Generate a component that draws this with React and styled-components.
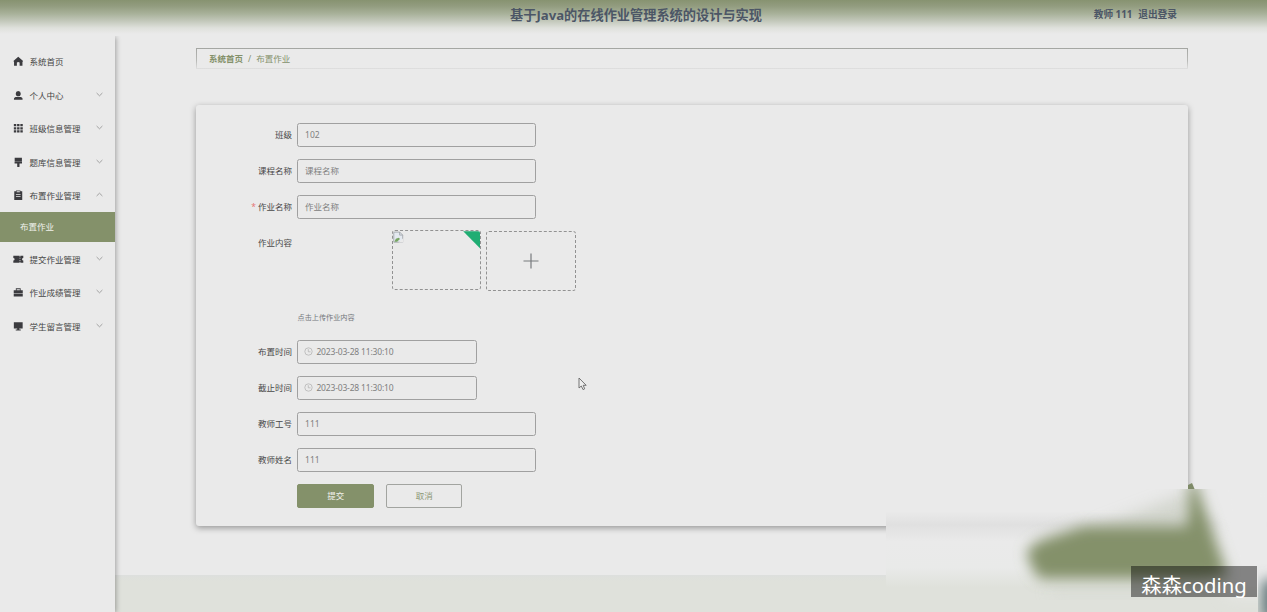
import React from 'react';
import styled, { createGlobalStyle } from 'styled-components';

const GlobalStyle = createGlobalStyle`
  *, *::before, *::after { box-sizing: border-box; }
  body {
    margin: 0;
    overflow: hidden;
    background: #eaeaea;
    color: #505050;
    font-family: "Noto Sans", "Noto Sans CJK SC", sans-serif;
    font-size: 8.5px;
  }
`;

const Page = styled.div`
  position: relative;
  display: flex;
  flex-direction: column;
  width: 1267px;
  height: 612px;
  overflow: hidden;
`;

const Header = styled.header`
  flex: none;
  display: grid;
  grid-template-columns: 1fr auto 1fr;
  align-items: center;
  height: 36px;
  padding: 0 90px 7px 95px;
  background: linear-gradient(#879370 0, #929c7f 6px, #a9b29b 14px, #c3c8bb 21px, #dfe1dc 28px, #eaeaea 34px);
  color: #4c5666;
  font-weight: 700;
`;

const Title = styled.h1`
  grid-column: 2;
  margin: 0;
  font-size: 13.2px;
  line-height: 20px;
  white-space: nowrap;
`;

const Account = styled.div`
  display: flex;
  justify-content: flex-end;
  gap: 6px;
  padding-top: 1px;
  font-size: 9.7px;
  line-height: 20px;
`;

const Body = styled.div`
  flex: 1;
  display: flex;
  min-height: 0;
`;

const Sidebar = styled.nav`
  flex: none;
  width: 115.4px;
  padding-top: 8.4px;
  box-shadow: 1px 1px 5px rgba(0, 0, 0, 0.32);
  clip-path: inset(0 -8px 0 0);
  z-index: 1;
  background: #eaeaea;
`;

const MenuItem = styled.div`
  display: flex;
  align-items: center;
  height: 33.5px;
  padding: 0 12px 0 13px;
  color: #454545;
  svg:first-child { margin: 1px 6px 0 0; }
`;

const MenuText = styled.span`
  flex: 1;
  white-space: nowrap;
`;

const Chevron = styled.svg`
  width: 7px;
  height: 5px;
  margin-bottom: 1px;
  fill: none;
  stroke: #999;
  stroke-width: 0.9;
  transform: ${(p) => (p.$open ? 'rotate(180deg)' : 'none')};
`;

const SubItem = styled.div`
  height: 30px;
  padding-left: 20px;
  background: #84916a;
  color: #f1f2ec;
  line-height: 29.4px;
`;

const Main = styled.main`
  flex: 1;
  display: flex;
  flex-direction: column;
  padding-top: 12px;
`;

const Breadcrumb = styled.div`
  display: flex;
  align-items: center;
  gap: 5px;
  width: 992px;
  height: 21px;
  margin-left: 80.6px;
  padding: 0 12px 1px;
  border: 1px solid;
  border-image: linear-gradient(#a4a6a2, #b8b9b6 60%, #e0e0e0) 1;
  color: #84916a;
`;

const Crumb = styled.span`
  font-weight: ${(p) => (p.$link ? 600 : 400)};
`;

const Card = styled.section`
  width: 992px;
  height: 421px;
  margin: 36px 0 0 80.6px;
  padding: 18px 0 0 40px;
  border-radius: 3px;
  box-shadow: 0 2px 6px rgba(0, 0, 0, 0.36);
  background: #eaeaea;
`;

const Field = styled.div`
  display: flex;
  gap: 5.5px;
  height: ${(p) => p.$height || 24}px;
  margin-bottom: 12px;
`;

const Label = styled.label`
  width: 56px;
  color: #484848;
  line-height: 24px;
  text-align: right;
  white-space: nowrap;
  &::before {
    content: ${(p) => (p.$required ? '"*"' : 'none')};
    margin-right: 2px;
    color: #e57373;
  }
`;

const InputBox = styled.div`
  display: flex;
  align-items: center;
  gap: 3.5px;
  width: ${(p) => (p.$date ? 179.5 : 239)}px;
  height: 24px;
  padding: 0 ${(p) => (p.$date ? 5.4 : 6.6)}px 1.4px;
  border: 1px solid #a0a0a0;
  border-radius: 2.5px;
  color: #808080;
  letter-spacing: ${(p) => (p.$date ? '-0.17px' : '0')};
`;

const Upload = styled.div`
  display: flex;
  flex-direction: column;
  justify-content: space-between;
`;

const Tiles = styled.div`
  display: flex;
  align-items: flex-end;
  gap: 5px;
  height: 61px;
  margin: -1px 0 0 94.7px;
`;

const Tile = styled.div`
  display: flex;
  align-items: center;
  justify-content: center;
  align-self: ${(p) => (p.$filled ? 'flex-start' : 'flex-end')};
  width: ${(p) => (p.$filled ? 89 : 90)}px;
  height: 60px;
  border: 1px dashed #929292;
  border-radius: 3px;
  overflow: hidden;
`;

const Hint = styled.div`
  margin-bottom: 4px;
  color: #74777c;
  font-size: 7.15px;
  line-height: 14px;
`;

const Buttons = styled.div`
  display: flex;
  gap: 12px;
  padding-left: 61.5px;
`;

const Button = styled.button`
  width: 76.5px;
  height: 24px;
  padding: 0 0 2px;
  border: 1px solid ${(p) => (p.$primary ? '#84916a' : '#a2a4a0')};
  border-radius: 2px;
  background: ${(p) => (p.$primary ? '#84916a' : 'transparent')};
  color: ${(p) => (p.$primary ? '#f2f3ee' : '#8c9776')};
  font: inherit;
`;

const Footer = styled.footer`
  height: 37px;
  margin-top: auto;
  background: linear-gradient(#dddfdd, #dfe1db 6px);
`;

const Pointer = styled.svg`
  position: absolute;
  left: 578px;
  top: 377px;
`;

const Mascot = styled.svg`
  position: absolute;
  right: 0;
  bottom: 0;
`;

const Watermark = styled.div`
  position: absolute;
  right: 10px;
  bottom: 15px;
  width: 126px;
  height: 31px;
  background: rgba(0, 0, 0, 0.44);
  color: #fff;
  font-size: 20.3px;
  line-height: 38.5px;
  text-align: center;
  white-space: nowrap;
`;

const icons = {
  home: <path d="M5 .6.4 4.8 1 5.6V9.4h2.7V6.2q1.3-1 2.6 0v3.2H9V5.6l.6-.8Z" />,
  user: <path d="M5 1a2.5 2.5 0 0 1 2.4 2.5C7.4 5 6.4 6 5 6S2.6 5 2.6 3.5A2.5 2.5 0 0 1 5 1ZM.9 9.3V8.4C1 7 2 6.6 3.4 6.6h3.2C8 6.6 9 7 9.1 8.4v.9Z" />,
  grid: <path d="M.8 1h2.3v2.1H.8Zm3.1 0h2.3v2.1H3.9ZM7 1h2.3v2.1H7ZM.8 4h2.3v2.1H.8Zm3.1 0h2.3v2.1H3.9ZM7 4h2.3v2.1H7ZM.8 7h2.3v2.1H.8Zm3.1 0h2.3v2.1H3.9ZM7 7h2.3v2.1H7Z" />,
  brush: <path d="M1.6.8h6.9v3.5H1.6Zm-.1 3.8h7.1v1.5H6.2v3.1q-1.1.8-2.2 0V6.1H1.5Z" />,
  order: <path fillRule="evenodd" d="M1.2 1.3h1.7V.5h4.2v.8h1.7v8.2H1.2ZM3.5 1.2v1h3v-1ZM2.8 4v.7h4.4V4Zm0 2v.7h4.4V6Z" />,
  ticket: <path fillRule="evenodd" d="M.3 1.6h6v1l.7-.1v-.9h2.8v2.1a1.2 1.2 0 0 0 0 2.4v2.2H7v-.9l-.7-.1v1h-6V6.1a1.2 1.2 0 0 0 0-2.4Zm6 2v1H7v-1Zm0 2v1H7v-1Z" />,
  case: <path fillRule="evenodd" d="M2.7 3V1.3h4.6V3h2v2.7H.7V3Zm.8 0h3v-.9h-3ZM.7 6.3h8.6v2.8H.7Z" />,
  monitor: <path d="M.8 1.1h8.4v6H6v1h1.4V9H2.6v-.9H4v-1H.8Z" />,
};

function MenuIcon({ name }) {
  return (
    <svg width="10.5" height="10.5" viewBox="0 0 10 10" fill="#3b3b3f">
      {icons[name]}
    </svg>
  );
}

const menu = [
  { icon: 'home', text: '系统首页', leaf: true },
  { icon: 'user', text: '个人中心' },
  { icon: 'grid', text: '班级信息管理' },
  { icon: 'brush', text: '题库信息管理' },
  { icon: 'order', text: '布置作业管理', child: '布置作业' },
  { icon: 'ticket', text: '提交作业管理' },
  { icon: 'case', text: '作业成绩管理' },
  { icon: 'monitor', text: '学生留言管理' },
];

function TextField({ label, value, required, date }) {
  return (
    <Field>
      <Label $required={required}>{label}</Label>
      <InputBox $date={date}>
        {date && (
          <svg width="9" height="9" viewBox="0 0 9 9" fill="none" stroke="#b5b5b5" strokeWidth=".8">
            <circle cx="4.5" cy="4.5" r="3.7" />
            <path d="M4.3 2.2v2.6h2.2" />
          </svg>
        )}
        {value}
      </InputBox>
    </Field>
  );
}

export default function App() {
  return (
    <Page>
      <GlobalStyle />
      <Header>
        <Title>基于Java的在线作业管理系统的设计与实现</Title>
        <Account>
          <span>教师 111</span>
          <span>退出登录</span>
        </Account>
      </Header>
      <Body>
        <Sidebar>
          {menu.map((item) => (
            <React.Fragment key={item.text}>
              <MenuItem>
                <MenuIcon name={item.icon} />
                <MenuText>{item.text}</MenuText>
                {!item.leaf && (
                  <Chevron $open={!!item.child} viewBox="0 0 7 5">
                    <path d="M.6 1 3.5 3.8 6.4 1" />
                  </Chevron>
                )}
              </MenuItem>
              {item.child && <SubItem>{item.child}</SubItem>}
            </React.Fragment>
          ))}
        </Sidebar>
        <Main>
          <Breadcrumb>
            <Crumb $link>系统首页</Crumb>
            <span>/</span>
            <Crumb>布置作业</Crumb>
          </Breadcrumb>
          <Card>
            <TextField label="班级" value="102" />
            <TextField label="课程名称" value="课程名称" />
            <TextField label="作业名称" value="作业名称" required />
            <Field $height={97}>
              <Label>作业内容</Label>
              <Upload>
                <Tiles>
                  <Tile $filled>
                    <svg width="88" height="58" viewBox="0 0 88 58">
                      <path d="M.8.8h6l3 3V11h-9Z" fill="#e4e9f0" stroke="#9a9da3" strokeWidth=".8" />
                      <path d="M6.7.8v3h3" fill="none" stroke="#9a9da3" strokeWidth=".8" />
                      <path d="m1.4 10.5 1.5-3 3-1 1.2 1.2-3 2.8Z" fill="#77a562" />
                      <path d="M5.5 11.4 10.3 7v4.4Z" fill="#eaeaea" />
                      <path d="M71 0h17v17Z" fill="#20ad73" />
                    </svg>
                  </Tile>
                  <Tile>
                    <svg width="16" height="16" viewBox="0 0 16 16" stroke="#777a7d" strokeWidth="1.2">
                      <path d="M8 .5v15M.5 8h15" />
                    </svg>
                  </Tile>
                </Tiles>
                <Hint>点击上传作业内容</Hint>
              </Upload>
            </Field>
            <TextField label="布置时间" value="2023-03-28 11:30:10" date />
            <TextField label="截止时间" value="2023-03-28 11:30:10" date />
            <TextField label="教师工号" value="111" />
            <TextField label="教师姓名" value="111" />
            <Buttons>
              <Button $primary>提交</Button>
              <Button>取消</Button>
            </Buttons>
          </Card>
          <Footer />
        </Main>
      </Body>
      <Mascot width="381" height="132" viewBox="886 480 381 132">
        <defs>
          <clipPath id="pane"><path d="M886 489h381v123H886Z" /></clipPath>
          <filter id="soft" x="-20%" y="-40%" width="140%" height="180%"><feGaussianBlur stdDeviation="7" /></filter>
          <filter id="haze" x="-20%" y="-60%" width="140%" height="220%"><feGaussianBlur stdDeviation="8" /></filter>
          <linearGradient id="base" x1="0" y1="489" x2="0" y2="612" gradientUnits="userSpaceOnUse">
            <stop offset="0" stopColor="#eaeaea" />
            <stop offset=".18" stopColor="#eaeaea" />
            <stop offset=".29" stopColor="#e0e0e0" />
            <stop offset=".43" stopColor="#eaeaea" />
            <stop offset=".64" stopColor="#e9eae9" />
            <stop offset=".8" stopColor="#dfe1db" />
            <stop offset="1" stopColor="#dfe1db" />
          </linearGradient>
        </defs>
        <path d="m1188 485 4-2 3 7h-7Z" fill="#7e8a67" />
        <g clipPath="url(#pane)">
          <path d="M886 489h381v123H886Z" fill="url(#base)" />
          <path d="M1208 480h70v115h-50Z" fill="#eaeaea" filter="url(#haze)" />
          <path d="M1090 530 1190 492v38h-100Z" fill="#c9cdc2" opacity=".7" filter="url(#haze)" />
          <path d="M1050 590h160v6h-160Z" fill="#cfd2cc" opacity=".6" filter="url(#haze)" />
          <path d="M1027 552Q1031 543 1050 537L1084 526H1187L1190 478H1194L1228 576 1200 579H1041Q1031 572 1027 552Z" fill="#84916a" filter="url(#soft)" />
          <path d="M1262 580h20v40h-20Z" fill="#5f7478" filter="url(#soft)" />
        </g>
      </Mascot>
      <Pointer width="9" height="14" viewBox="0 0 9 14">
        <path d="M1 1v10l2.3-2 1.7 3.6 1.7-.8L5.2 8.3h3Z" fill="#eee" stroke="#666" strokeWidth=".9" />
      </Pointer>
      <Watermark>森森coding</Watermark>
    </Page>
  );
}
